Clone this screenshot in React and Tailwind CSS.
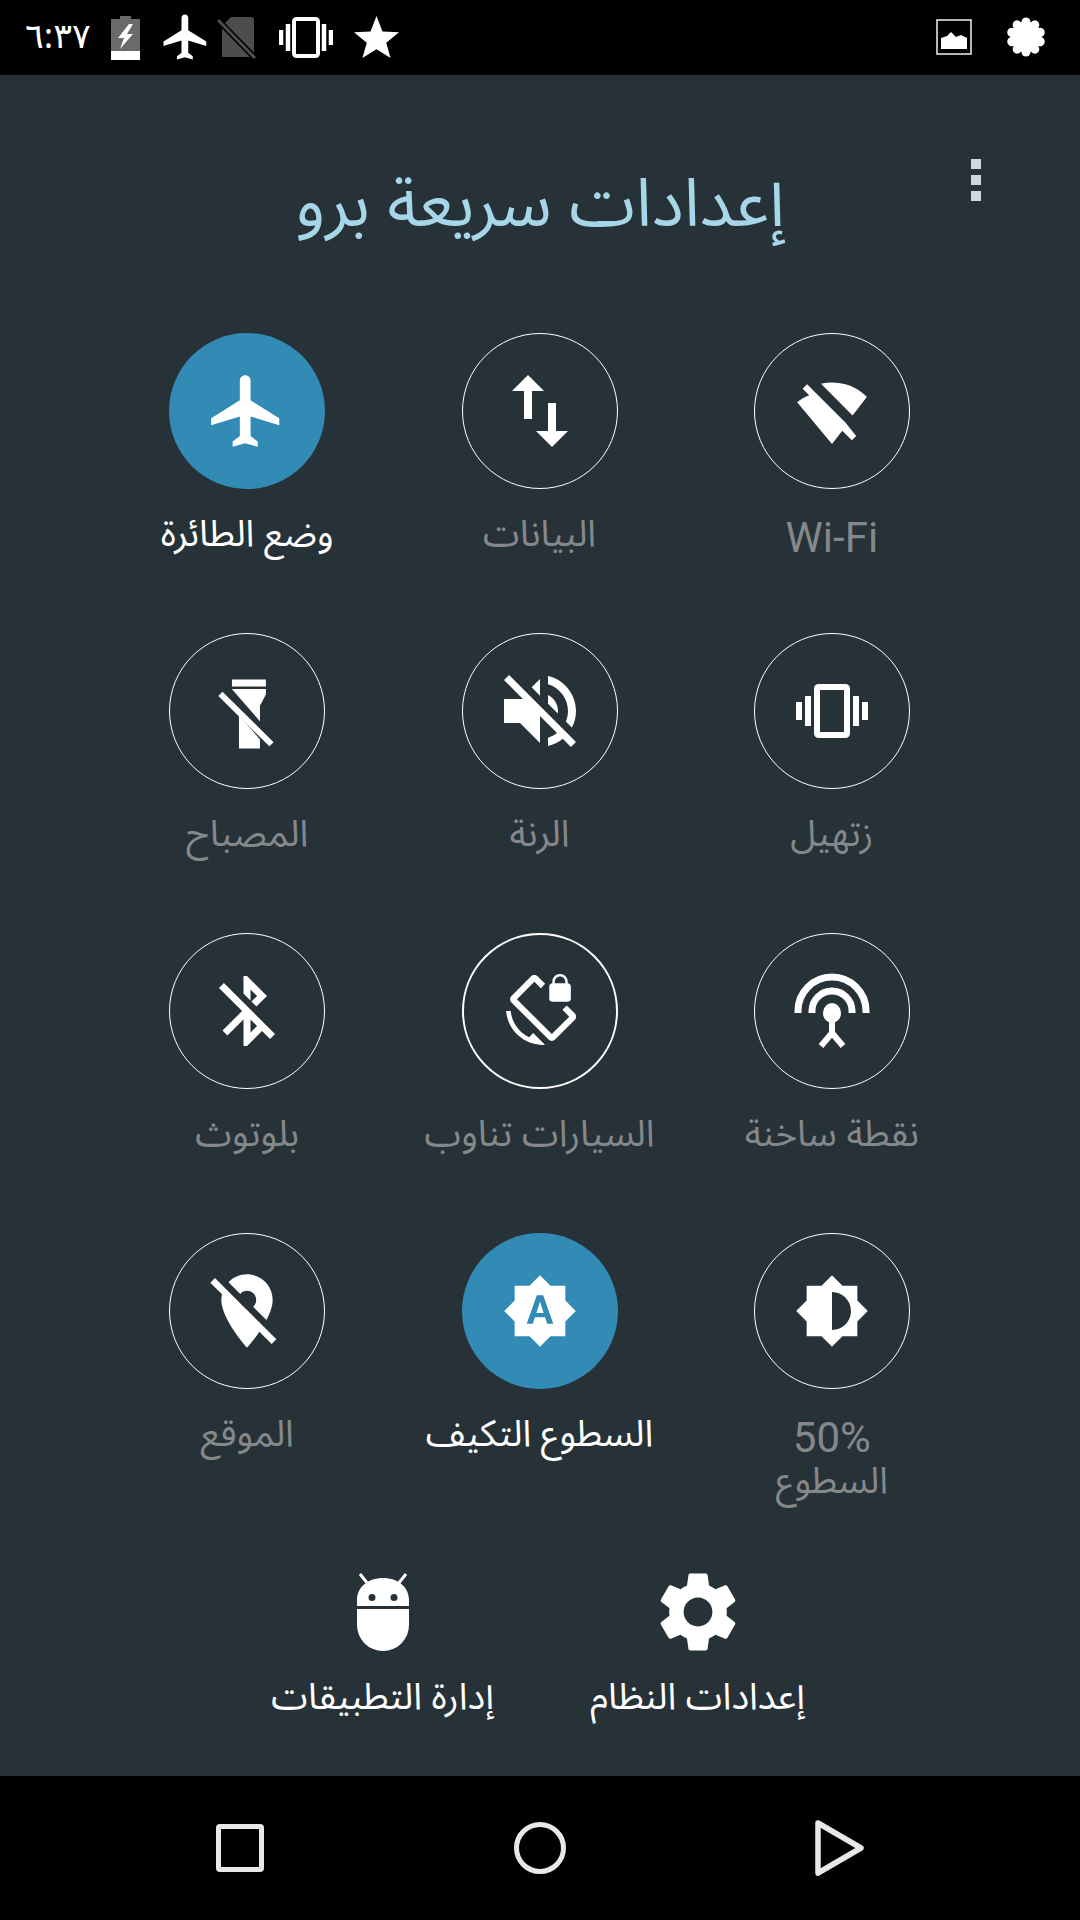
const WHITE = '#ffffff'
const BG = '#273238'

function Icon({ d, size = 84, rule = 'nonzero' }) {
  return (
    <svg width={size} height={size} viewBox="0 0 24 24" fill={WHITE}>
      <path d={d} fillRule={rule} />
    </svg>
  )
}

const paths = {
  plane: 'M21 16v-2l-8-5V3.5c0-.83-.67-1.5-1.5-1.5S10 2.67 10 3.5V9l-8 5v2l8-2.5V19l-2 1.5V22l3.5-1 3.5 1v-1.5L13 19v-5.5l8 2.5z',
  swap: 'M16 17.01V10h-2v7.01h-3L15 21l4-3.99h-3zM9 3L5 6.99h3V14h2V6.99h3L9 3z',
  wifiOff: 'M21.5 8.2C20.2 6.6 16.9 4.2 12 4.2c-1 0-2 .12-3 .35L17.6 13.2l3.9-5zM15.6 15.1L5.2 4.7 4 5.9l1.8 1.8C4.5 8.2 3.2 9 2.5 9.6L12 21l2.8-3.6 2.6 2.6 1.2-1.2-3-3.7z',
  vibrate: 'M0 15h2V9H0v6zm3 2h2V7H3v10zm19-8v6h2V9h-2zm-3 8h2V7h-2v10zM16.5 3h-9C6.67 3 6 3.67 6 4.5v15c0 .83.67 1.5 1.5 1.5h9c.83 0 1.5-.67 1.5-1.5v-15c0-.83-.67-1.5-1.5-1.5zM16 19H8V5h8v14z',
  volumeOff: 'M16.5 12c0-1.77-1.02-3.29-2.5-4.03v2.21l2.45 2.45c.03-.2.05-.41.05-.63zm2.5 0c0 .94-.2 1.82-.54 2.64l1.51 1.51C20.63 14.91 21 13.5 21 12c0-4.28-2.99-7.86-7-8.77v2.06c2.89.86 5 3.54 5 6.71zM4.27 3L3 4.27 7.73 9H3v6h4l5 5v-6.73l4.25 4.25c-.67.52-1.42.93-2.25 1.18v2.06c1.38-.31 2.63-.95 3.69-1.81L19.73 21 21 19.73l-9-9L4.27 3zM12 4L9.91 6.09 12 8.18V4z',
  bluetoothOff: 'M13 5.83l1.88 1.88-1.6 1.6 1.41 1.41 3.02-3.02L12 2h-1v5.03l2 2v-3.2zM5.41 4L4 5.41 10.59 12 5 17.59 6.41 19 11 14.41V22h1l4.29-4.29 2.3 2.29L20 18.59 5.41 4zM13 18.17v-3.76l1.88 1.88L13 18.17z',
  rotationLock: 'M23.25 12.77l-2.57-2.57-1.41 1.41 2.22 2.22-5.66 5.66L4.51 8.17l5.66-5.66 2.1 2.1 1.41-1.41L11.23.75c-.59-.59-1.54-.59-2.12 0L2.75 7.11c-.59.59-.59 1.54 0 2.12l12.02 12.02c.59.59 1.54.59 2.12 0l6.36-6.36c.59-.59.59-1.54 0-2.12zM8.47 20.48C5.2 18.94 2.86 15.76 2.5 12H1c.51 6.16 5.66 11 11.95 11l.66-.03-3.81-3.82-1.33 1.33zM16 9h5c.55 0 1-.45 1-1V4c0-.55-.45-1-1-1v-.5C21 1.12 19.88 0 18.5 0S16 1.12 16 2.5V3c-.55 0-1 .45-1 1v4c0 .55.45 1 1 1zm.8-6.5c0-.94.76-1.7 1.7-1.7s1.7.76 1.7 1.7V3h-3.4v-.5z',
  locationOff: 'M12 6.5c1.38 0 2.5 1.12 2.5 2.5 0 .74-.33 1.39-.83 1.85l3.63 3.63c.98-1.86 1.7-3.8 1.7-5.48 0-3.87-3.13-7-7-7-1.98 0-3.76.83-5.04 2.15l3.19 3.19c.46-.52 1.11-.84 1.85-.84zm4.37 9.6l-4.63-4.63-.11-.11L3.27 3 2 4.27l3.18 3.18C5.07 7.95 5 8.47 5 9c0 5.25 7 13 7 13s1.67-1.85 3.38-4.35L18.73 21 20 19.73l-3.63-3.63z',
  brightness: 'M20 15.31L23.31 12 20 8.69V4h-4.69L12 .69 8.69 4H4v4.69L.69 12 4 15.31V20h4.69L12 23.31 15.31 20H20v-4.69zM12 18V6c3.31 0 6 2.69 6 6s-2.69 6-6 6z',
  brightnessAuto: 'M10.85 12.65h2.3L12 9l-1.15 3.65zM20 8.69V4h-4.69L12 .69 8.69 4H4v4.69L.69 12 4 15.31V20h4.69L12 23.31 15.31 20H20v-4.69L23.31 12 20 8.69zM14.3 16l-.7-2h-3.2l-.7 2H7.8L11 7h2l3.2 9h-1.9z',
  settings: 'M19.14 12.94c.04-.3.06-.61.06-.94 0-.32-.02-.64-.07-.94l2.03-1.58c.18-.14.23-.41.12-.61l-1.92-3.32c-.12-.22-.37-.29-.59-.22l-2.39.96c-.5-.38-1.03-.7-1.62-.94l-.36-2.54c-.04-.24-.24-.41-.48-.41h-3.84c-.24 0-.43.17-.47.41l-.36 2.54c-.59.24-1.13.57-1.62.94l-2.39-.96c-.22-.08-.47 0-.59.22L2.74 8.87c-.12.21-.08.47.12.61l2.03 1.58c-.05.3-.09.63-.09.94s.02.64.07.94l-2.03 1.58c-.18.14-.23.41-.12.61l1.92 3.32c.12.22.37.29.59.22l2.39-.96c.5.38 1.03.7 1.62.94l.36 2.54c.05.24.24.41.48.41h3.84c.24 0 .44-.17.47-.41l.36-2.54c.59-.24 1.13-.56 1.62-.94l2.39.96c.22.08.47 0 .59-.22l1.92-3.32c.12-.22.07-.47-.12-.61l-2.01-1.58zM12 15.6c-1.98 0-3.6-1.62-3.6-3.6s1.62-3.6 3.6-3.6 3.6 1.62 3.6 3.6-1.62 3.6-3.6 3.6z',
}

function FlashlightOff() {
  return (
    <svg width={84} height={84} viewBox="0 0 24 24" fill={WHITE}>
      <path d="M7.7 3h9.7v2H7.7z" />
      <path d="M7.7 5.7h9.7v1.600l-1.700 3.200v12.200H9.700V10.500L7.700 7.300z" />
      <path d="M6.200 6.600L19.600 22" stroke={BG} strokeWidth="3.400" />
      <path d="M4.400 7.100L19 21.500" stroke={WHITE} strokeWidth="1.700" />
    </svg>
  )
}

function Hotspot() {
  return (
    <svg width={84} height={84} viewBox="0 0 84 84" fill="none" stroke={WHITE}>
      <path d="M8 44V42A34 34 0 0 1 76 42V44" strokeWidth="7" />
      <path d="M22 44V42A20 20 0 0 1 62 42V44" strokeWidth="7" />
      <ellipse cx="42" cy="44" rx="9" ry="10" fill={WHITE} stroke="none" />
      <path d="M42 50V64M31 77L42 64L53 77" strokeWidth="6" />
    </svg>
  )
}

function Android() {
  return (
    <svg width={60} height={80} viewBox="0 0 60 80" fill={WHITE}>
      <path d="M7 2l8 10M53 2l-8 10" stroke={WHITE} strokeWidth="3" />
      <path fillRule="evenodd" d="M4 34V28C4 15 15 6 30 6s26 9 26 22v6zM19 22a3.500 3.500 0 1 0 0 7 3.500 3.500 0 0 0 0-7zM41 22a3.500 3.500 0 1 0 0 7 3.500 3.500 0 0 0 0-7z" />
      <path d="M4 37h52v16a26 26 0 0 1-52 0z" />
    </svg>
  )
}

function StatusBar() {
  return (
    <div dir="ltr" className="flex h-[75px] items-center bg-black pl-[25px] pr-[34px]">
      <span className="-mt-[6px] w-[65px] whitespace-nowrap font-['Noto_Sans','DejaVu_Sans',sans-serif] text-[35px] leading-none text-white">٦:٣٧</span>
      <svg className="ml-[21px]" width={29} height={44} viewBox="0 0 29 44">
        <path d="M9 0h11v3h9v41H0V3h9z" fill="#6a6a6a" />
        <path d="M0 35h29v9H0z" fill={WHITE} />
        <path d="M18 8L7 22h6l-4 11 13-15h-6l6-10z" fill={WHITE} />
      </svg>
      <div className="-mt-[2px] ml-[19px] h-[54px]"><Icon d={paths.plane} size={54} /></div>
      <svg className="ml-[4px]" width={39} height={42} viewBox="0 0 39 42">
        <path d="M14 0h20a3 3 0 0 1 3 3v37H5V9z" fill="#4d4d4d" />
        <path d="M1 3l37 38" stroke="#000" strokeWidth="6" />
        <path d="M1 3l37 38" stroke="#4d4d4d" strokeWidth="3" />
      </svg>
      <svg className="-mt-[1px] ml-[23px]" width={54} height={41} viewBox="0 0 54 41" fill="none" stroke={WHITE}>
        <rect x="15" y="2" width="24" height="37" rx="2.500" strokeWidth="4" />
        <path d="M2 13v15M9 7v27M45 7v27M52 13v15" strokeWidth="4.500" />
      </svg>
      <svg className="-mt-[2px] ml-[21px]" width={45} height={42} viewBox="0 0 24 22.400" fill={WHITE}>
        <path d="M12 0l3.200 8.200 8.800.5-6.800 5.600 2.300 8.100-7.500-4.700-7.500 4.700 2.300-8.100L0 8.700l8.800-.5z" />
      </svg>
      <svg className="-mt-[2px] ml-auto" width={36} height={36} viewBox="0 0 36 36" fill={WHITE}>
        <rect x="1" y="1" width="34" height="34" fill="none" stroke="#e4e4e4" strokeWidth="1.600" />
        <path d="M5 30V19l6-2 4-4 5 5 5-2 6 3v11z" />
      </svg>
      <svg className="-mt-[2px] ml-[34px]" width={40} height={40} viewBox="0 0 40 40" fill={WHITE}>
        <circle cx="20" cy="20" r="15.500" />
        {[0, 36, 72, 108, 144, 180, 216, 252, 288, 324].map((a) => (
          <circle key={a} cx="20" cy="5" r="4.500" transform={`rotate(${a} 20 20)`} />
        ))}
      </svg>
    </div>
  )
}

const labelFont = "font-['Noto_Sans_Arabic','Noto_Naskh_Arabic','DejaVu_Sans',sans-serif] text-[37px]"
const latinFont = "font-['Roboto',sans-serif] text-[42px] pt-[3px]"

const tiles = [
  { icon: <Icon d={paths.wifiOff} size={88} />, label: 'Wi-Fi', latin: true },
  { icon: <Icon d={paths.swap} size={96} />, label: 'البيانات' },
  { icon: <Icon d={paths.plane} size={86} />, label: 'وضع الطائرة', active: true },
  { icon: <Icon d={paths.vibrate} size={72} />, label: 'زتهيل' },
  { icon: <Icon d={paths.volumeOff} size={96} />, label: 'الرنة' },
  { icon: <FlashlightOff />, label: 'المصباح' },
  { icon: <Hotspot />, label: 'نقطة ساخنة' },
  { icon: <Icon d={paths.rotationLock} size={74} />, label: 'السيارات تناوب', thick: true },
  { icon: <Icon d={paths.bluetoothOff} size={84} />, label: 'بلوتوث' },
  { icon: <Icon d={paths.brightness} size={76} />, label: '50%', second: 'السطوع', latin: true },
  { icon: <Icon d={paths.brightnessAuto} size={76} rule="evenodd" />, label: 'السطوع التكيف', active: true },
  { icon: <Icon d={paths.locationOff} size={88} />, label: 'الموقع' },
]

function Tile({ icon, label, second, active, thick, latin }) {
  const color = active ? 'text-white' : 'text-[#85888b]'
  return (
    <div className="flex h-[300px] flex-col items-center">
      <div
        className={`flex h-[156px] w-[156px] items-center justify-center rounded-full ${
          active ? 'bg-[#328bb5]' : thick ? 'border-2 border-white' : 'border border-white'
        }`}
      >
        {icon}
      </div>
      <div className="mt-[22px] flex flex-col items-center">
        <span className={`whitespace-nowrap leading-[47px] ${color} ${latin ? latinFont : labelFont}`}>{label}</span>
        {second && <span className={`-mt-[3px] whitespace-nowrap leading-[47px] ${color} ${labelFont}`}>{second}</span>}
      </div>
    </div>
  )
}

function Shortcut({ icon, label }) {
  return (
    <div className="flex w-[260px] flex-col items-center">
      <div className="flex h-[80px] items-center justify-center">{icon}</div>
      <div className={`mt-[22px] whitespace-nowrap leading-[47px] text-white ${labelFont}`}>{label}</div>
    </div>
  )
}

function NavBar() {
  return (
    <div className="flex h-[144px] items-center justify-between bg-black pl-[216px] pr-[216px]">
      <div className="h-[48px] w-[48px] rounded-[4px] border-[5px] border-[#e8e8e8]" />
      <div className="h-[52px] w-[52px] rounded-full border-[5px] border-[#e8e8e8]" />
      <svg width={49} height={56} viewBox="0 0 49 56" fill="none" stroke="#e8e8e8" strokeWidth="5.500" strokeLinejoin="round">
        <path d="M3 3L46 28L3 53z" />
      </svg>
    </div>
  )
}

export default function App() {
  return (
    <div className="flex h-[1920px] w-[1080px] flex-col overflow-hidden bg-[#273238]">
      <StatusBar />
      <main dir="rtl" className="relative flex-1">
        <div className="absolute right-[99px] top-[84px] flex flex-col gap-[6px]">
          <span className="h-[10px] w-[10px] bg-[#cfd8dc]" />
          <span className="h-[10px] w-[10px] bg-[#cfd8dc]" />
          <span className="h-[10px] w-[10px] bg-[#cfd8dc]" />
        </div>
        <h1 className="flex h-[258px] items-center justify-center font-['Noto_Sans_Arabic','Noto_Naskh_Arabic','DejaVu_Sans',sans-serif] text-[67px] font-normal leading-none text-[#a6d6e8]">
          إعدادات سريعة برو
        </h1>
        <div className="mr-[102px] grid w-[877px] grid-cols-3">
          {tiles.map((t) => (
            <Tile key={t.label} {...t} />
          ))}
        </div>
        <div className="mt-[39px] flex justify-center gap-[55px]">
          <Shortcut icon={<Icon d={paths.settings} size={96} />} label="إعدادات النظام" />
          <Shortcut icon={<Android />} label="إدارة التطبيقات" />
        </div>
      </main>
      <NavBar />
    </div>
  )
}
